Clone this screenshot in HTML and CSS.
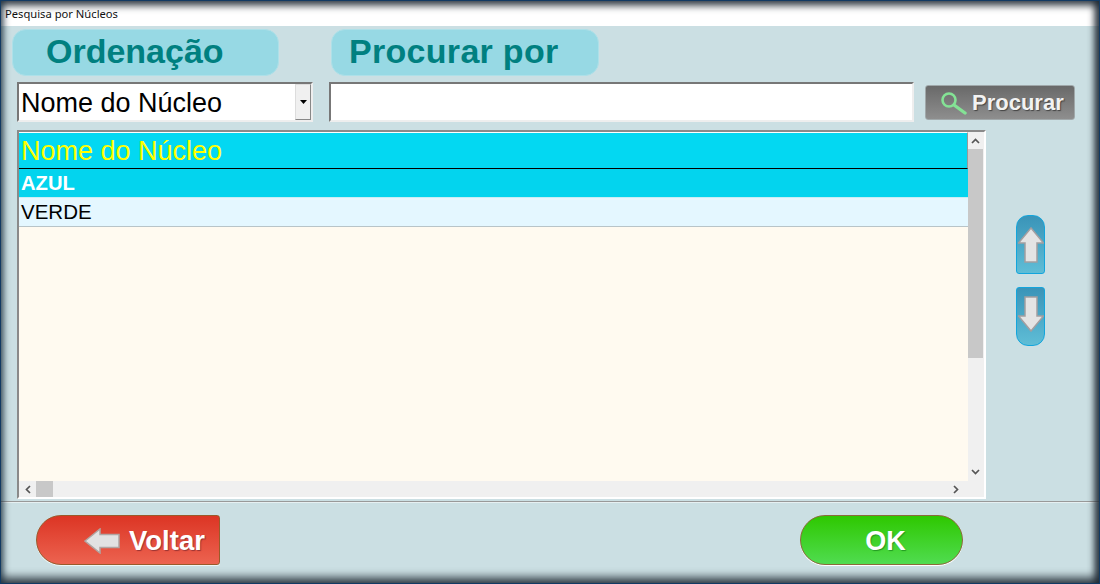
FILE: index.html
```html
<!DOCTYPE html>
<html lang="pt">
  <head>
    <meta charset="UTF-8" />
    <title>Pesquisa por Núcleos</title>
    <link rel="stylesheet" href="styles.css">
  </head>
  <body>
    <div class="window">
      <div class="titlebar">Pesquisa por Núcleos</div>

      <section class="search">
        <div class="labels">
          <h2 class="label label-order">Ordenação</h2>
          <h2 class="label label-find">Procurar por</h2>
        </div>

        <div class="filters">
          <div class="combo">
            <span class="combo-text">Nome do Núcleo</span>
            <span class="combo-btn">
              <svg width="7" height="4" viewBox="0 0 7 4"><path d="M0 0h7L3.5 4z" fill="#000"/></svg>
            </span>
          </div>
          <input class="find-input" type="text" />
          <button class="find-btn">
            <svg width="28" height="24" viewBox="0 0 28 24">
              <circle cx="9" cy="9" r="6.5" fill="none" stroke="#84e295" stroke-width="2.6"/>
              <path d="M14 14 L25 22" stroke="#84e295" stroke-width="3.4" stroke-linecap="round"/>
            </svg>
            Procurar
          </button>
        </div>

        <div class="content">
          <div class="grid">
            <div class="grid-body">
              <div class="grid-rows">
                <div class="grid-head">Nome do Núcleo</div>
                <div class="row row-selected">AZUL</div>
                <div class="row row-normal">VERDE</div>
              </div>
              <div class="vscroll">
                <svg class="sb-arrow" width="9" height="6" viewBox="0 0 9 6"><path d="M1 5l3.5-3.5L8 5" fill="none" stroke="#555" stroke-width="1.7"/></svg>
                <div class="vtrack"><div class="vthumb"></div></div>
                <svg class="sb-arrow" width="9" height="6" viewBox="0 0 9 6"><path d="M1 1l3.5 3.5L8 1" fill="none" stroke="#555" stroke-width="1.7"/></svg>
              </div>
            </div>
            <div class="hscroll">
              <svg class="sb-arrow" width="6" height="9" viewBox="0 0 6 9"><path d="M5 1L1.5 4.5 5 8" fill="none" stroke="#555" stroke-width="1.7"/></svg>
              <div class="htrack"><div class="hthumb"></div></div>
              <svg class="sb-arrow" width="6" height="9" viewBox="0 0 6 9"><path d="M1 1l3.5 3.5L1 8" fill="none" stroke="#555" stroke-width="1.7"/></svg>
              <div class="hcorner"></div>
            </div>
          </div>

          <div class="movers">
            <button class="mover mover-up">
              <svg width="26" height="36" viewBox="0 0 26 36"><path d="M13 1L25.5 16H19V35H7V16H.5z" fill="#e4e4e4" stroke="#a39ea0" stroke-width="1.5"/></svg>
            </button>
            <button class="mover mover-down">
              <svg class="mover-down-icon" width="26" height="36" viewBox="0 0 26 36"><path d="M13 35L25.5 20H19V1H7V20H.5z" fill="#e4e4e4" stroke="#a39ea0" stroke-width="1.5"/></svg>
            </button>
          </div>
        </div>
      </section>

      <footer class="footer">
        <button class="btn-back">
          <svg width="36" height="26" viewBox="0 0 36 26"><path d="M1 13L16 1V6.5H35V19.5H16V25z" fill="#e2e2e2" stroke="#b0a5a2" stroke-width="1.5"/></svg>
          Voltar
        </button>
        <button class="btn-ok">OK</button>
      </footer>
    </div>
  </body>
</html>
```

FILE: styles.css
```css
* {
  box-sizing: border-box;
}

html, body {
  margin: 0;
  padding: 0;
}

body {
  width: 1100px;
  height: 584px;
  overflow: hidden;
  font-family: "Liberation Sans", sans-serif;
}

.window {
  position: relative;
  width: 1100px;
  height: 584px;
  display: flex;
  flex-direction: column;
  background: #cbdfe3;
}

/* dark window edge, sits over everything */
.window::after {
  content: "";
  position: absolute;
  inset: 0;
  pointer-events: none;
  border: 1px solid #123a63;
  box-shadow: inset 6px 0 6px -3px rgba(30, 50, 65, 0.7),
    inset -8px 0 6px -3px rgba(30, 40, 50, 0.85),
    inset 0 -10px 8px -4px rgba(30, 40, 50, 0.8),
    inset 0 9px 7px -4px rgba(30, 40, 50, 0.8);
}

.titlebar {
  height: 26px;
  padding: 6px 0 0 5px;
  background: #fff;
  font-family: "Noto Sans", sans-serif;
  font-size: 11.2px;
  line-height: 15px;
  color: #111;
}

.search {
  flex: 1;
  padding: 3px 0 0 12px;
  border-bottom: 1px solid #999;
  box-shadow: 0 1px 0 #e6f0f2;
}

.labels {
  display: flex;
  gap: 52px;
}

.label {
  width: 267px;
  height: 47px;
  margin: 0;
  background: #97d9e4;
  border: 1px solid #aee0e8;
  border-radius: 14px;
  color: #008080;
  font-size: 34px;
  line-height: 43px;
  font-weight: bold;
}

.label-order {
  padding-left: 33px;
}

.label-find {
  width: 268px;
  padding-left: 17px;
  letter-spacing: 0.3px;
}

.filters {
  display: flex;
  align-items: center;
  margin-top: 6px;
  padding-left: 5px;
}

.combo {
  display: flex;
  width: 296px;
  height: 40px;
  background: #fff;
  border: 2px solid;
  border-color: #777 #eee #eee #777;
}

.combo-text {
  flex: 1;
  padding: 1px 0 0 2px;
  font-size: 27px;
  line-height: 37px;
  color: #000;
}

.combo-btn {
  display: flex;
  align-items: center;
  justify-content: center;
  width: 16px;
  background: #f0f0f0;
  border: 1px solid #888;
  border-top-color: #ddd;
  border-left-color: #ddd;
}

.find-input {
  width: 585px;
  height: 40px;
  margin-left: 16px;
  background: #fff;
  border: 2px solid;
  border-color: #777 #eee #eee #777;
  outline: none;
}

.find-btn {
  display: flex;
  align-items: center;
  gap: 4px;
  width: 150px;
  height: 35px;
  margin-left: 11px;
  padding: 1px 0 0 14px;
  background: linear-gradient(#696969, #8e8e8e);
  border: 1px solid #a0a8aa;
  border-radius: 3px;
  color: #f2f2f2;
  font-family: "Liberation Sans", sans-serif;
  font-size: 22px;
  font-weight: bold;
  text-shadow: 1px 1px 1px #444;
}

.content {
  display: flex;
  margin-top: 8px;
  padding-left: 5px;
}

.grid {
  display: flex;
  flex-direction: column;
  width: 969px;
  height: 369px;
  border: 2px solid;
  border-color: #8a8a8a #fff #fff #8a8a8a;
  background: #f0f0f0;
}

.grid-body {
  flex: 1;
  display: flex;
  min-height: 0;
}

.grid-rows {
  flex: 1;
  background: #fffaf0;
}

.grid-head {
  height: 37px;
  padding: 2px 0 0 2px;
  background: #03d8f2;
  border-top: 1px solid #fff;
  border-right: 1px solid #999;
  border-bottom: 1px solid #000;
  color: #ffff00;
  font-size: 27px;
  line-height: 33px;
}

.row {
  height: 29px;
  padding-left: 2px;
  font-size: 20.5px;
  line-height: 28px;
  border-bottom: 1px solid #b8c4c8;
}

.row-selected {
  background: #03d4ee;
  color: #fff;
  font-size: 20.2px;
  font-weight: bold;
  border-bottom-color: #c8eef5;
}

.row-normal {
  background: #e4f7ff;
  color: #000;
}

.vscroll {
  display: flex;
  flex-direction: column;
  align-items: flex-start;
  width: 16px;
  background: #f0f0f0;
}

.vscroll .sb-arrow {
  margin: 6px 0 6px 3px;
}

.vtrack {
  flex: 1;
}

.vthumb {
  width: 15px;
  height: 209px;
  margin-top: -1px;
  background: #c8c8c8;
}

.hscroll {
  display: flex;
  align-items: center;
  height: 16px;
  padding-left: 6px;
}

.htrack {
  flex: 1;
  padding-left: 5px;
}

.hthumb {
  width: 17px;
  height: 16px;
  background: #c8c8c8;
}

.hcorner {
  width: 25px;
}

.movers {
  display: flex;
  flex-direction: column;
  gap: 13px;
  margin: 85px 0 0 30px;
}

.mover {
  display: flex;
  align-items: center;
  justify-content: center;
  width: 29px;
  height: 59px;
  padding: 0;
  background: linear-gradient(#3a94b8, #5fbdd6);
  border: 1px solid #13a5dc;
}

.mover-up {
  border-radius: 12px 12px 3px 3px;
}

.mover-down {
  border-radius: 3px 3px 12px 12px;
}

.mover-down-icon {
  margin-bottom: 5px;
}

.footer {
  display: flex;
  align-items: flex-start;
  height: 82px;
  padding: 13px 0 0 36px;
}

.btn-back {
  display: flex;
  align-items: center;
  gap: 9px;
  width: 184px;
  height: 50px;
  padding: 2px 0 0 47px;
  background: linear-gradient(#dc3524, #ec6350);
  border: 1px solid #9a5a2a;
  border-radius: 26px 3px 3px 26px;
  color: #fff;
  font-family: "Liberation Sans", sans-serif;
  font-size: 27.5px;
  font-weight: bold;
  text-shadow: 1px 1px 1px #933;
  box-shadow: 0 1px 0 #eef5f6;
}

.btn-ok {
  width: 163px;
  height: 50px;
  margin-left: 580px;
  padding: 3px 0 0 8px;
  background: linear-gradient(#2ec800, #50dc50);
  border: 1px solid #8a6a3a;
  border-radius: 25px;
  color: #fff;
  font-family: "Liberation Sans", sans-serif;
  font-size: 27px;
  font-weight: bold;
  text-shadow: 1px 1px 1px #292;
  box-shadow: 0 1px 0 #fff;
}
```
